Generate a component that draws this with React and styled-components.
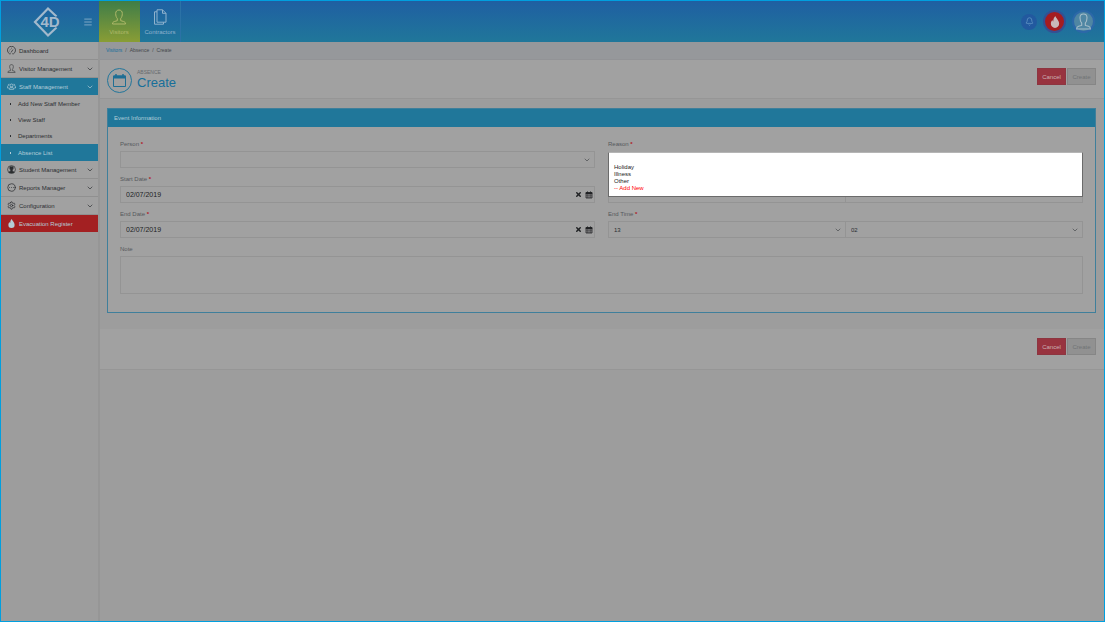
import React, { useState } from 'react'
import styled, { createGlobalStyle, css } from 'styled-components'
import { Bell, ChevronDown, CircleEllipsis, Menu, Settings, X } from 'lucide-react'

const GlobalStyle = createGlobalStyle`
*{box-sizing:border-box;}
body{
  margin:0;
  background:#9d9d9d;
  font-family:"Liberation Sans", Arial, sans-serif;
  font-size:6px;
  line-height:8px;
  color:#2b2e31;
}
button,input,select,textarea{
  font:inherit;
  color:inherit;
  margin:0;
}
a{
  color:inherit;
  text-decoration:none;
}
ul,ol{
  list-style:none;
  margin:0;
  padding:0;
}
`
const Page = styled.div`
display:flex;
flex-direction:column;
min-height:100vh;
border:1px solid #009fdf;
`
const Header = styled.header`
display:flex;
height:41px;
color:#8fb2cd;
background:linear-gradient(#1f5fa2,#20779a);
`
const Brand = styled.div`
display:flex;
align-items:center;
justify-content:space-between;
width:98px;
padding:0 6px 0 32px;
`
const IconButton = styled.button`
display:flex;
padding:0;
border:none;
background:none;
cursor:pointer;
`
const Tab = styled.a`
display:flex;
flex-direction:column;
align-items:center;
gap:3px;
width:41px;
padding-top:8px;
border-right:1px solid #2b72a6;
${({ $active }) => $active && css`
color:#b0b96a;
border-right-color:transparent;
background:linear-gradient(#3f7d48,#899d35);
`}
`
const HeaderTools = styled.div`
display:flex;
align-items:center;
gap:6px;
margin-left:auto;
padding-right:9px;
`
const RoundButton = styled.button`
display:flex;
align-items:center;
justify-content:center;
width:${({ $size }) => $size}px;
height:${({ $size }) => $size}px;
padding:0;
border:${({ $ring }) => $ring ? `2px solid ${$ring}` : 'none'};
border-radius:50%;
color:${({ $color }) => $color};
background:${({ $bg }) => $bg};
cursor:pointer;
`
const Body = styled.div`
display:flex;
flex:1;
`
const Sidebar = styled.nav`
width:99px;
border-right:2px solid #969696;
`
const MenuLink = styled.a`
display:flex;
align-items:center;
gap:3px;
height:18px;
padding:0 4px 0 6px;
border-bottom:1px solid #909090;
background:#a1a1a1;
& > span{flex:1;}
${({ $tone }) => $tone && css`
height:17px;
border-bottom:none;
color:#b4cdd8;
background:${$tone};
`}
`
const SubMenu = styled.ul`
padding-top:1px;
background:#a1a1a1;
`
const SubLink = styled.a`
display:flex;
align-items:center;
gap:7px;
height:16px;
padding-left:9px;
&::before{
  content:"";
  width:1px;
  height:2px;
  background:currentColor;
}
${({ $active }) => $active && css`
height:17px;
color:#b4cdd8;
background:#20779a;
`}
`
const Main = styled.main`
flex:1;
min-width:0;
`
const Breadcrumb = styled.ol`
display:flex;
gap:3px;
height:18px;
padding:4px 6px;
font-size:5px;
color:#45484b;
background:#96989b;
border-bottom:1px solid #929396;
a{color:#176f9c;}
li + li::before{
  content:"/";
  margin-right:3px;
}
`
const Bar = styled.div`
display:flex;
align-items:flex-start;
gap:5px;
min-height:39px;
padding:8px 8px 5px 7px;
border-bottom:1px solid #969696;
background:#a1a1a1;
`
const FooterBar = styled(Bar)`
min-height:41px;
padding-top:9px;
`
const TitleIcon = styled.div`
display:flex;
align-items:center;
justify-content:center;
width:25px;
height:25px;
border:1px solid #23769b;
border-radius:50%;
color:#1f6f94;
`
const Heading = styled.div`
padding-top:1px;
`
const Eyebrow = styled.div`
font-size:5px;
line-height:6px;
color:#676a6e;
`
const Title = styled.h1`
margin:0;
font-size:13px;
line-height:15px;
font-weight:400;
color:#176f9a;
`
const Actions = styled.div`
display:flex;
gap:1px;
margin-left:auto;
`
const Button = styled.button`
min-width:29px;
height:17px;
padding:0 4px;
border:1px solid ${({ $danger }) => $danger ? '#8d3540' : '#868686'};
color:${({ $danger }) => $danger ? '#ccb0b3' : '#707375'};
background:${({ $danger }) => $danger ? '#98333f' : '#919191'};
cursor:pointer;
`
const Content = styled.div`
padding:9px 8px 16px 7px;
`
const Panel = styled.section`
border:1px solid #3f7f9b;
background:#a1a1a1;
`
const PanelTitle = styled.h2`
margin:0;
padding:5px 6px;
font-size:6px;
line-height:8px;
font-weight:400;
color:#b4cdd8;
background:#20779a;
`
const Form = styled.form`
display:grid;
grid-template-columns:1fr 1fr;
gap:7px 13px;
padding:13px 12px 18px;
`
const Field = styled.div`
position:relative;
display:flex;
flex-direction:column;
gap:3px;
grid-column:${({ $wide }) => $wide ? '1 / -1' : 'auto'};
`
const Label = styled.label`
color:#55585c;
`
const Required = styled.span`
color:#b01824;
font-weight:700;
`
const box = css`
height:17px;
border:1px solid #949494;
border-radius:0;
background:#a1a1a1;
`
const SelectBox = styled.div`
display:grid;
flex:1;
align-items:center;
& + &{margin-left:-1px;}
& > *{grid-area:1 / 1;}
svg{
  justify-self:end;
  margin-right:4px;
  color:#44474a;
  pointer-events:none;
}
`
const Select = styled.select`
${box}
width:100%;
padding:0 5px;
appearance:none;
`
const Times = styled.div`
display:flex;
`
const DateBox = styled.div`
${box}
display:flex;
align-items:center;
gap:3px;
padding:0 1px 0 5px;
color:#202224;
input{
  flex:1;
  min-width:0;
  padding:0;
  border:none;
  background:none;
  font-size:7px;
}
`
const Note = styled.textarea`
${box}
display:block;
height:38px;
padding:4px 5px;
resize:none;
`
const ReasonList = styled.select`
position:absolute;
top:12px;
left:0;
z-index:1;
width:100%;
height:45px;
padding:4px 4px;
border:1px solid #6b6b6b;
border-top-color:#b5b5b5;
border-radius:0;
background:#fff;
color:#222;
overflow:hidden;
outline:none;
option{
  min-height:7px;
  height:7px;
  padding:0 1px;
  line-height:7px;
}
`
const AddOption = styled.option`
color:#f00;
`

const Logo = () => (
  <svg width="32" height="32" viewBox="0 0 32 32" fill="none">
    <path d="M23.500 10.500 15 2.500 2 16l13 13.500 8.500-8" stroke="#a3b9cc" strokeWidth="2.200" />
    <text x="7.500" y="21" fontFamily="Liberation Sans" fontSize="15" fontWeight="700" fill="#a3b9cc" stroke="#20699e" strokeWidth="1" paintOrder="stroke">4D</text>
  </svg>
)

const Bust = ({ size = 16 }) => (
  <svg width={size} height={size} viewBox="0 0 16 16" fill="none" stroke="currentColor">
    <path d="M6.300 9.500C5.200 8.300 4.700 6.500 4.700 4.500 4.700 2.300 6 1 8 1s3.300 1.300 3.300 3.500c0 2-.5 3.800-1.600 5v2.200l3 .8c1 .3 1.800 1 1.800 2.500h-13c0-1.500.8-2.200 1.800-2.500l3-.8z" />
  </svg>
)

const Pages = () => (
  <svg width="16" height="16" viewBox="0 0 16 16" fill="none" stroke="currentColor">
    <path d="M5 .8h5.500L14 4.300v8.900H5zM10.500.8v3.500H14M5 2.800H2.500v12.400h9v-2" />
  </svg>
)

const Drop = ({ size = 9 }) => (
  <svg width={size} height={size} viewBox="0 0 16 16" fill="currentColor">
    <path d="M8.500 0c.4 2.600 5 5.600 5 10A5.700 5.700 0 0 1 8 16a5.700 5.700 0 0 1-5.500-6c0-2 1-3.600 2-4.800.2 1 .6 1.600 1.200 2C5.600 4.500 6.500 1.800 8.500 0z" />
  </svg>
)

const Dial = () => (
  <svg width="9" height="9" viewBox="0 0 18 18" fill="none" stroke="currentColor" strokeWidth="1.500">
    <path d="M5 15.500a8 8 0 1 1 8 0M5 15.500h2.500M13 15.500h-2.500M8 13l4-6M4 10h1M5.500 6l1 1M9 3.500V5" />
  </svg>
)

const Team = () => (
  <svg width="9" height="9" viewBox="0 0 18 18" fill="none" stroke="currentColor" strokeWidth="1.500">
    <circle cx="9" cy="7" r="3" />
    <path d="M4.500 14.500c0-3 2-4 4.500-4s4.500 1 4.500 4zM5 4.500C3 4 2 5.500 2.500 7.500 1 8.500.8 10 1 12h2.500M13 4.500c2-.5 3 1 2.500 3 1.500 1 1.700 2.500 1.500 4.500h-2.500" />
  </svg>
)

const Student = () => (
  <svg width="9" height="9" viewBox="0 0 16 16" fill="none" stroke="currentColor">
    <circle cx="8" cy="8" r="7" strokeWidth="1.200" />
    <path d="M5 3h6v4L9.500 9v1.500L12 12v2H4v-2l2.500-1.500V9L5 7z" fill="currentColor" />
  </svg>
)

const EventCalendar = () => (
  <svg width="15" height="15" viewBox="0 0 15 15" fill="none" stroke="currentColor">
    <path d="M1.500 3h12v10.500h-12z" />
    <path d="M1.500 3h12v2h-12z" fill="currentColor" />
    <path d="M4 1v2M11 1v2" strokeWidth="1.500" />
  </svg>
)

const DateIcon = () => (
  <svg width="8" height="8" viewBox="0 0 16 16" fill="none" stroke="currentColor">
    <path d="M2 3h12v11H2z" strokeWidth="1.500" />
    <path d="M2 3h12v3H2z" fill="currentColor" />
    <path d="M5 1v3M11 1v3" strokeWidth="2" />
    <path d="M2 9h12M2 12h12M5 6v8M8 6v8M11 6v8" strokeWidth=".8" />
  </svg>
)

const Chevron = () => <ChevronDown size={8} strokeWidth={2} />

const DateField = ({ id, label }) => {
  const [value, setValue] = useState("02/07/2019")
  return (
    <Field>
      <Label htmlFor={id}>{label} <Required>*</Required></Label>
      <DateBox>
        <input id={id} value={value} onChange={(e) => setValue(e.target.value)} />
        <IconButton type="button" aria-label="Clear" onClick={() => setValue("")}><X size={7} strokeWidth={5} /></IconButton>
        <IconButton type="button" aria-label="Open calendar"><DateIcon /></IconButton>
      </DateBox>
    </Field>
  )
}

const TimeField = ({ id, label }) => (
  <Field>
    <Label htmlFor={id}>{label} <Required>*</Required></Label>
    <Times>
      <SelectBox>
        <Select id={id} defaultValue="13"><option>13</option></Select>
        <Chevron />
      </SelectBox>
      <SelectBox>
        <Select aria-label={`${label} minutes`} defaultValue="02"><option>02</option></Select>
        <Chevron />
      </SelectBox>
    </Times>
  </Field>
)

const FormActions = () => (
  <Actions>
    <Button type="button" $danger>Cancel</Button>
    <Button type="submit" form="absence">Create</Button>
  </Actions>
)

const App = () => {
  return (
    <>
      <GlobalStyle />
      <Page>
        <Header>
          <Brand>
            <Logo />
            <IconButton aria-label="Toggle menu"><Menu size={10} strokeWidth={2} /></IconButton>
          </Brand>
          <Tab href="#visitors" $active><Bust />Visitors</Tab>
          <Tab href="#contractors"><Pages />Contractors</Tab>
          <HeaderTools>
            <RoundButton $size={16} $bg="#22599f" $color="#6497c4" aria-label="Notifications"><Bell size={9} /></RoundButton>
            <RoundButton $size={23} $bg="#a51c20" $ring="#354f93" $color="#c9b9bb" aria-label="Evacuation"><Drop size={12} /></RoundButton>
            <RoundButton $size={23} $bg="#4f86a3" $ring="#2c68a8" $color="#a8bfca" aria-label="Account"><Bust size={17} /></RoundButton>
          </HeaderTools>
        </Header>
        <Body>
          <Sidebar>
            <MenuLink href="#dashboard"><Dial /><span>Dashboard</span></MenuLink>
            <MenuLink href="#visitor"><Bust size={9} /><span>Visitor Management</span><Chevron /></MenuLink>
            <MenuLink href="#staff" $tone="#20779a"><Team /><span>Staff Management</span><Chevron /></MenuLink>
            <SubMenu>
              <li><SubLink href="#add">Add New Staff Member</SubLink></li>
              <li><SubLink href="#view">View Staff</SubLink></li>
              <li><SubLink href="#departments">Departments</SubLink></li>
              <li><SubLink href="#absence" $active>Absence List</SubLink></li>
            </SubMenu>
            <MenuLink href="#student"><Student /><span>Student Management</span><Chevron /></MenuLink>
            <MenuLink href="#reports"><CircleEllipsis size={9} /><span>Reports Manager</span><Chevron /></MenuLink>
            <MenuLink href="#configuration"><Settings size={9} /><span>Configuration</span><Chevron /></MenuLink>
            <MenuLink href="#evacuation" $tone="#a32022"><Drop size={9} /><span>Evacuation Register</span></MenuLink>
          </Sidebar>
          <Main>
            <Breadcrumb>
              <li><a href="#visitors">Visitors</a></li>
              <li>Absence</li>
              <li>Create</li>
            </Breadcrumb>
            <Bar>
              <TitleIcon><EventCalendar /></TitleIcon>
              <Heading>
                <Eyebrow>ABSENCE</Eyebrow>
                <Title>Create</Title>
              </Heading>
              <FormActions />
            </Bar>
            <Content>
              <Panel>
                <PanelTitle>Event Information</PanelTitle>
                <Form id="absence" onSubmit={(e) => e.preventDefault()}>
                  <Field>
                    <Label htmlFor="person">Person <Required>*</Required></Label>
                    <SelectBox>
                      <Select id="person" />
                      <Chevron />
                    </SelectBox>
                  </Field>
                  <Field>
                    <Label htmlFor="reason">Reason <Required>*</Required></Label>
                    <ReasonList id="reason" size={5}>
                      <option value="" aria-label="None"></option>
                      <option>Holiday</option>
                      <option>Illness</option>
                      <option>Other</option>
                      <AddOption>-- Add New</AddOption>
                    </ReasonList>
                  </Field>
                  <DateField id="start-date" label="Start Date" />
                  <TimeField id="start-time" label="Start Time" />
                  <DateField id="end-date" label="End Date" />
                  <TimeField id="end-time" label="End Time" />
                  <Field $wide>
                    <Label htmlFor="note">Note</Label>
                    <Note id="note" />
                  </Field>
                </Form>
              </Panel>
            </Content>
            <FooterBar><FormActions /></FooterBar>
          </Main>
        </Body>
      </Page>
    </>
  )
}

export default App
